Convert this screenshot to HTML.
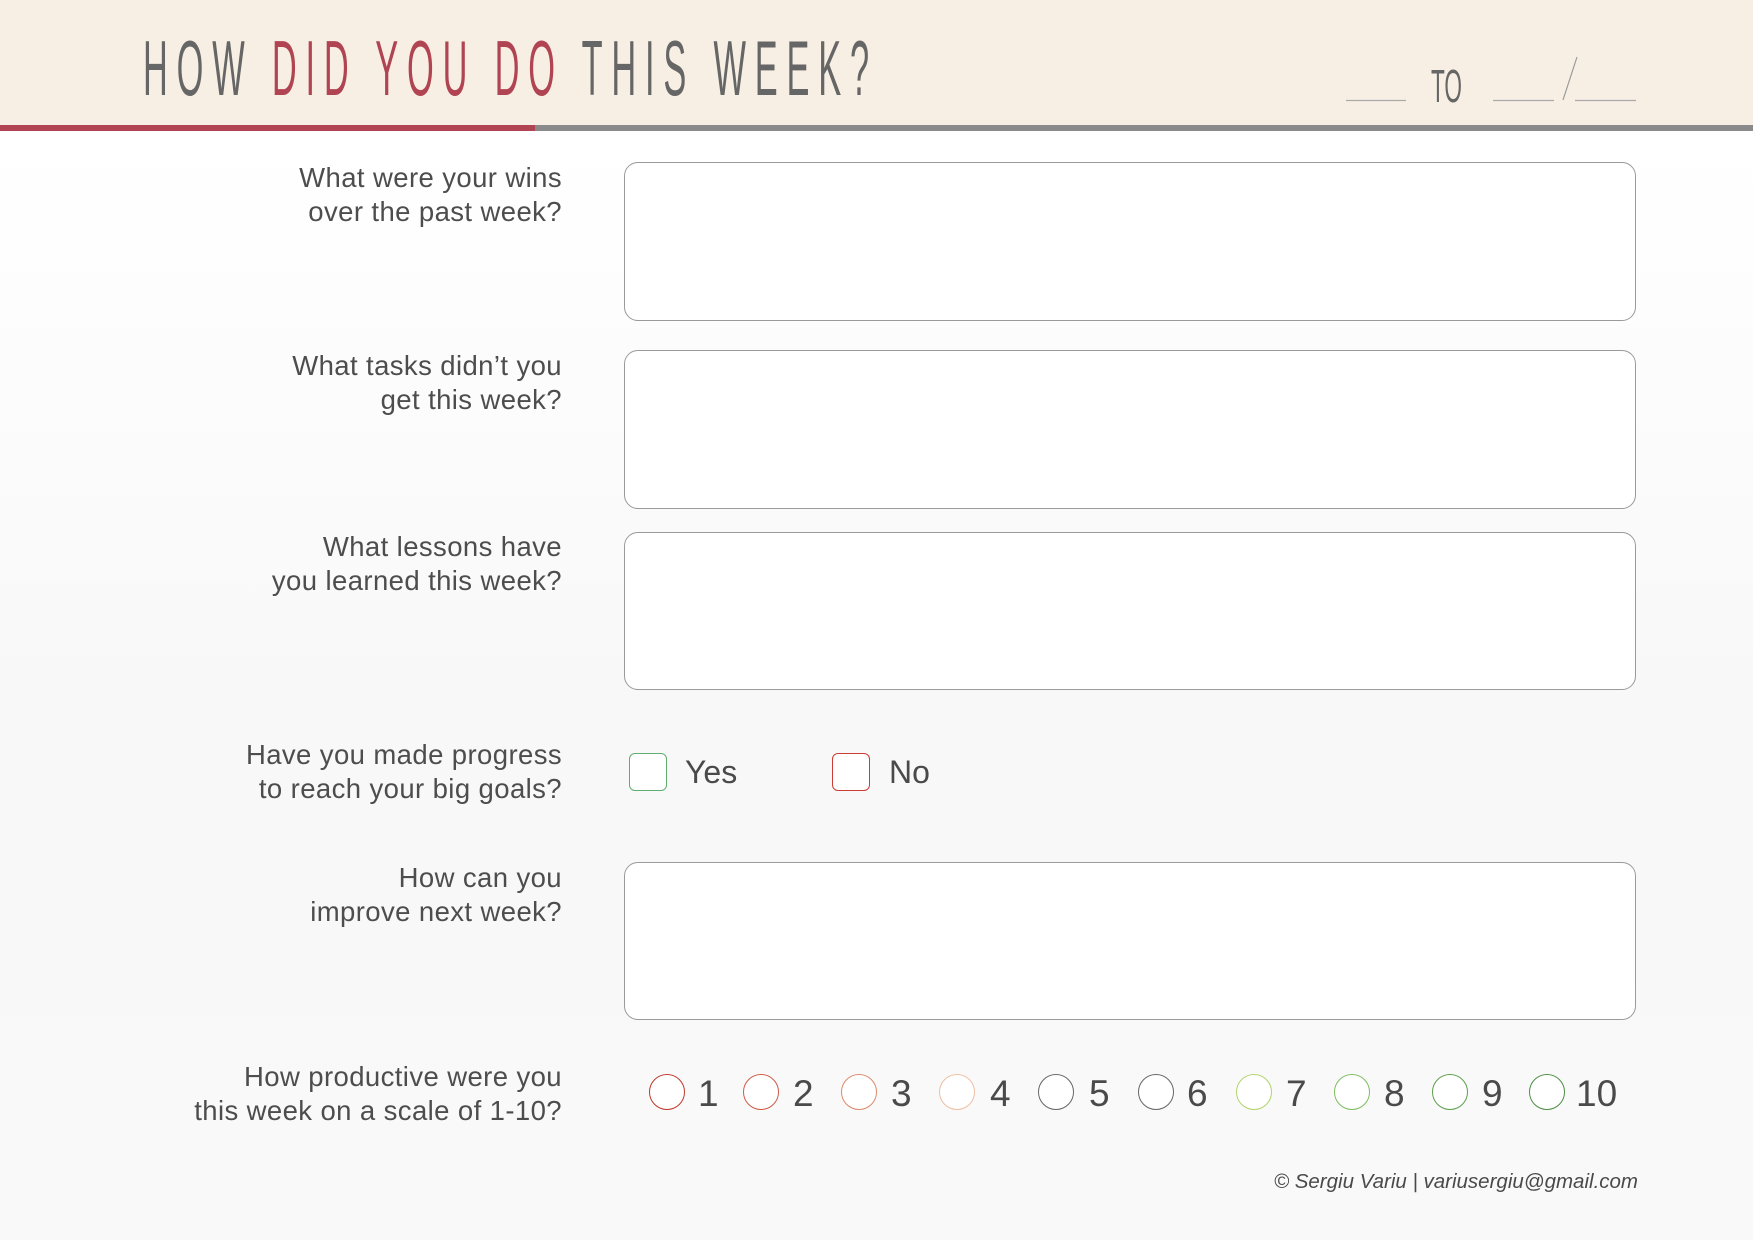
<!DOCTYPE html>
<html><head><meta charset="utf-8"><style>
html,body{margin:0;padding:0}
body{width:1753px;height:1240px;position:relative;overflow:hidden;background:linear-gradient(#ffffff 140px,#f8f8f8 700px,#f9f9f9);font-family:"Liberation Sans",sans-serif;color:#4a4a4a}
.hdr{position:absolute;left:0;top:0;width:1753px;height:125px;background:#f8efe4}
.bar1{position:absolute;left:0;top:125px;width:535px;height:6px;background:#b04452}
.bar2{position:absolute;left:535px;top:125px;width:1218px;height:6px;background:#8a8a8a}
.lbl{position:absolute;right:1191px;text-align:right;font-size:27.5px;line-height:34px;color:#4d4d4d;white-space:nowrap;letter-spacing:0.4px}
.box{position:absolute;left:624px;width:1010px;border:1.5px solid #9a9a9a;border-radius:14px;background:#fff}
.cb{position:absolute;top:753px;width:36px;height:36px;border-radius:6px;background:#fff}
.opt{position:absolute;top:752px;font-size:32px;line-height:40px;color:#4a4a4a}
.c{position:absolute;top:1074px;width:36px;height:36px;border-radius:50%;border:1.5px solid;background:#fff;box-sizing:border-box}
.n{position:absolute;top:1073px;font-size:37px;line-height:42px;color:#4a4a4a}
.foot{position:absolute;right:115px;top:1170px;font-size:20.5px;font-style:italic;color:#4a4a4a}
</style></head><body>
<div class="hdr"></div>
<svg style="position:absolute;left:0;top:0" width="1753" height="125">
<text x="143" y="95" font-family="Liberation Sans Narrow, Liberation Sans, sans-serif" font-size="78" textLength="735" lengthAdjust="spacingAndGlyphs" letter-spacing="20" fill="#666"><tspan>HOW </tspan><tspan fill="#b04452">DID YOU DO</tspan><tspan> THIS WEEK?</tspan></text>
<line x1="1346" y1="100.5" x2="1406" y2="100.5" stroke="#aaa" stroke-width="1.2"/>
<text x="1431" y="102" font-family="Liberation Sans Narrow, Liberation Sans, sans-serif" font-size="46" textLength="31" lengthAdjust="spacingAndGlyphs" fill="#666">TO</text>
<line x1="1493" y1="100.5" x2="1554" y2="100.5" stroke="#aaa" stroke-width="1.2"/>
<line x1="1563" y1="100" x2="1577" y2="57" stroke="#999" stroke-width="1.2"/>
<line x1="1575" y1="100.5" x2="1636" y2="100.5" stroke="#aaa" stroke-width="1.2"/>
</svg>
<div class="bar1"></div><div class="bar2"></div>

<div class="lbl" style="top:161px">What were your wins<br>over the past week?</div>
<div class="box" style="top:162px;height:157px"></div>
<div class="lbl" style="top:349px">What tasks didn’t you<br>get this week?</div>
<div class="box" style="top:350px;height:157px"></div>
<div class="lbl" style="top:530px">What lessons have<br>you learned this week?</div>
<div class="box" style="top:532px;height:156px"></div>
<div class="lbl" style="top:738px">Have you made progress<br>to reach your big goals?</div>
<div class="cb" style="left:629px;border:1.5px solid #5fae6e"></div><div class="opt" style="left:685px">Yes</div>
<div class="cb" style="left:832px;border:1.5px solid #cc3c32"></div><div class="opt" style="left:889px">No</div>
<div class="lbl" style="top:861px">How can you<br>improve next week?</div>
<div class="box" style="top:862px;height:156px"></div>
<div class="lbl" style="top:1060px">How productive were you<br>this week on a scale of 1-10?</div>

<div class="c" style="left:649px;border-color:#c0392b"></div><div class="n" style="left:698px">1</div>
<div class="c" style="left:743px;border-color:#cf5a45"></div><div class="n" style="left:793px">2</div>
<div class="c" style="left:841px;border-color:#dd8a6c"></div><div class="n" style="left:891px">3</div>
<div class="c" style="left:939px;border-color:#efbfa2"></div><div class="n" style="left:990px">4</div>
<div class="c" style="left:1038px;border-color:#666"></div><div class="n" style="left:1089px">5</div>
<div class="c" style="left:1138px;border-color:#666"></div><div class="n" style="left:1187px">6</div>
<div class="c" style="left:1236px;border-color:#b2d46c"></div><div class="n" style="left:1286px">7</div>
<div class="c" style="left:1334px;border-color:#7fbd5f"></div><div class="n" style="left:1384px">8</div>
<div class="c" style="left:1432px;border-color:#5e9e4c"></div><div class="n" style="left:1482px">9</div>
<div class="c" style="left:1529px;border-color:#4d8f43"></div><div class="n" style="left:1576px">10</div>

<div class="foot">© Sergiu Variu | variusergiu@gmail.com</div>
</body></html>
